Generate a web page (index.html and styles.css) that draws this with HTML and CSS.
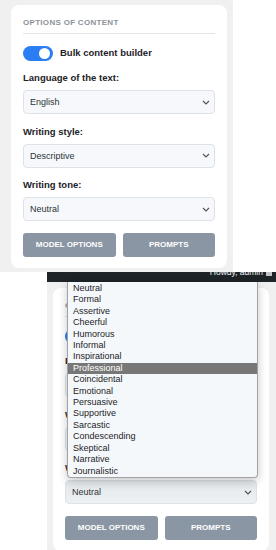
FILE: index.html
```html
<!DOCTYPE html>
<html>
<head>
<meta charset="utf-8">
<link rel="stylesheet" href="styles.css">
</head>
<body>
<div class="shot shot-top">
  <section class="card">
    <div class="card-head">Options of content</div>
    <div class="toggle-row">
      <span class="switch"><span class="knob"></span></span>
      <span class="toggle-label">Bulk content builder</span>
    </div>
    <div class="field">
      <div class="field-label">Language of the text:</div>
      <div class="select"><span>English</span><svg class="chev" width="8" height="5" viewBox="0 0 8 5"><polyline points="1,1 4,4 7,1" fill="none" stroke="#50575e" stroke-width="1.2"/></svg></div>
    </div>
    <div class="field">
      <div class="field-label">Writing style:</div>
      <div class="select"><span>Descriptive</span><svg class="chev" width="8" height="5" viewBox="0 0 8 5"><polyline points="1,1 4,4 7,1" fill="none" stroke="#50575e" stroke-width="1.2"/></svg></div>
    </div>
    <div class="field">
      <div class="field-label">Writing tone:</div>
      <div class="select"><span>Neutral</span><svg class="chev" width="8" height="5" viewBox="0 0 8 5"><polyline points="1,1 4,4 7,1" fill="none" stroke="#50575e" stroke-width="1.2"/></svg></div>
    </div>
    <div class="buttons">
      <div class="btn">Model options</div>
      <div class="btn">Prompts</div>
    </div>
  </section>
</div>
<div class="shot shot-bottom">
  <div class="adminbar"><span class="howdy">Howdy, admin</span><span class="avatar"></span></div>
  <div class="stage">
    <section class="card">
      <div class="card-head">Options of content</div>
      <div class="toggle-row">
        <span class="switch"><span class="knob"></span></span>
        <span class="toggle-label">Bulk content builder</span>
      </div>
      <div class="field">
        <div class="field-label">Language of the text:</div>
        <div class="select"><span>English</span><svg class="chev" width="8" height="5" viewBox="0 0 8 5"><polyline points="1,1 4,4 7,1" fill="none" stroke="#50575e" stroke-width="1.2"/></svg></div>
      </div>
      <div class="field">
        <div class="field-label">Writing style:</div>
        <div class="select"><span>Descriptive</span><svg class="chev" width="8" height="5" viewBox="0 0 8 5"><polyline points="1,1 4,4 7,1" fill="none" stroke="#50575e" stroke-width="1.2"/></svg></div>
      </div>
      <div class="field">
        <div class="field-label">Writing tone:</div>
        <div class="select select-shaded"><span>Neutral</span><svg class="chev" width="8" height="5" viewBox="0 0 8 5"><polyline points="1,1 4,4 7,1" fill="none" stroke="#50575e" stroke-width="1.2"/></svg></div>
      </div>
      <div class="buttons">
        <div class="btn">Model options</div>
        <div class="btn">Prompts</div>
      </div>
    </section>
    <ul class="popup">
      <li>Neutral</li>
      <li>Formal</li>
      <li>Assertive</li>
      <li>Cheerful</li>
      <li>Humorous</li>
      <li>Informal</li>
      <li>Inspirational</li>
      <li class="sel">Professional</li>
      <li>Coincidental</li>
      <li>Emotional</li>
      <li>Persuasive</li>
      <li>Supportive</li>
      <li>Sarcastic</li>
      <li>Condescending</li>
      <li>Skeptical</li>
      <li>Narrative</li>
      <li>Journalistic</li>
    </ul>
  </div>
</div>
</body>
</html>
```

FILE: styles.css
```css
html, body {
  margin: 0;
  padding: 0;
}
body {
  width: 276px;
  height: 550px;
  overflow: hidden;
  background: #ffffff;
  font-family: "Liberation Sans", Arial, sans-serif;
}
.shot-top {
  width: 233px;
  height: 272px;
  box-sizing: border-box;
  background: #f0f0f1;
  padding: 5px 0 0 11px;
}
.card {
  width: 216px;
  box-sizing: border-box;
  background: #ffffff;
  border-radius: 8px;
  padding: 12px 12px 11px;
  display: flex;
  flex-direction: column;
  gap: 11.5px;
}
.card-head {
  font-size: 8px;
  font-weight: 700;
  letter-spacing: 0.3px;
  line-height: 11px;
  color: #8c9299;
  text-transform: uppercase;
  padding-bottom: 5px;
  border-bottom: 1px solid #e2e4e7;
}
.toggle-row {
  display: flex;
  align-items: center;
  gap: 7px;
  height: 15px;
}
.switch {
  flex: none;
  width: 30px;
  height: 15px;
  box-sizing: border-box;
  border-radius: 8px;
  background: #2a7df3;
  display: flex;
  align-items: center;
  justify-content: flex-end;
  padding: 0 3px;
}
.knob {
  width: 11px;
  height: 11px;
  border-radius: 50%;
  background: #ffffff;
}
.toggle-label, .field-label {
  font-size: 9.5px;
  font-weight: 700;
  color: #1d2327;
  line-height: 12px;
}
.field {
  display: flex;
  flex-direction: column;
  gap: 6px;
}
.select {
  height: 24px;
  box-sizing: border-box;
  border: 1px solid #dde2e8;
  border-radius: 4px;
  background: #f6f8fb;
  display: flex;
  align-items: center;
  justify-content: space-between;
  padding: 0 4px 0 6px;
  font-size: 9px;
  color: #2c3338;
}
.chev {
  display: block;
}
.buttons {
  display: grid;
  grid-template-columns: 1fr 1fr;
  gap: 7px;
}
.btn {
  height: 24px;
  border-radius: 3px;
  background: #8a96a3;
  color: #ffffff;
  font-size: 8px;
  font-weight: 700;
  text-transform: uppercase;
  display: flex;
  align-items: center;
  justify-content: center;
}
.shot-bottom {
  margin-left: 47px;
  width: 229px;
  height: 278px;
  background: #f0f0f1;
  overflow: hidden;
}
.adminbar {
  height: 10px;
  background: #1d2327;
  display: flex;
  justify-content: flex-end;
  align-items: flex-start;
  gap: 3px;
  padding-right: 4px;
  overflow: hidden;
}
.howdy {
  font-size: 8.5px;
  line-height: 10px;
  color: #f0f0f1;
  margin-top: -5px;
}
.avatar {
  width: 6px;
  height: 4px;
  background: #c3c4c7;
}
.stage {
  position: relative;
  padding: 6px 0 0 6px;
}
.select-shaded {
  background: linear-gradient(#e4e7ea, #eef1f4);
}
.popup {
  position: absolute;
  top: 0;
  left: 20px;
  width: 191px;
  box-sizing: border-box;
  margin: 0;
  padding: 1px 0 0;
  list-style: none;
  background: #f5f8fb;
  border: 1px solid #9ea3a8;
  border-top: 0;
  border-radius: 0 0 4px 4px;
  box-shadow: 0 3px 10px rgba(0, 0, 0, 0.22);
}
.popup li {
  font-size: 9px;
  line-height: 11.4px;
  padding-left: 5px;
  color: #1d2327;
}
.popup li.sel {
  background: #777777;
  color: #ffffff;
}
```
